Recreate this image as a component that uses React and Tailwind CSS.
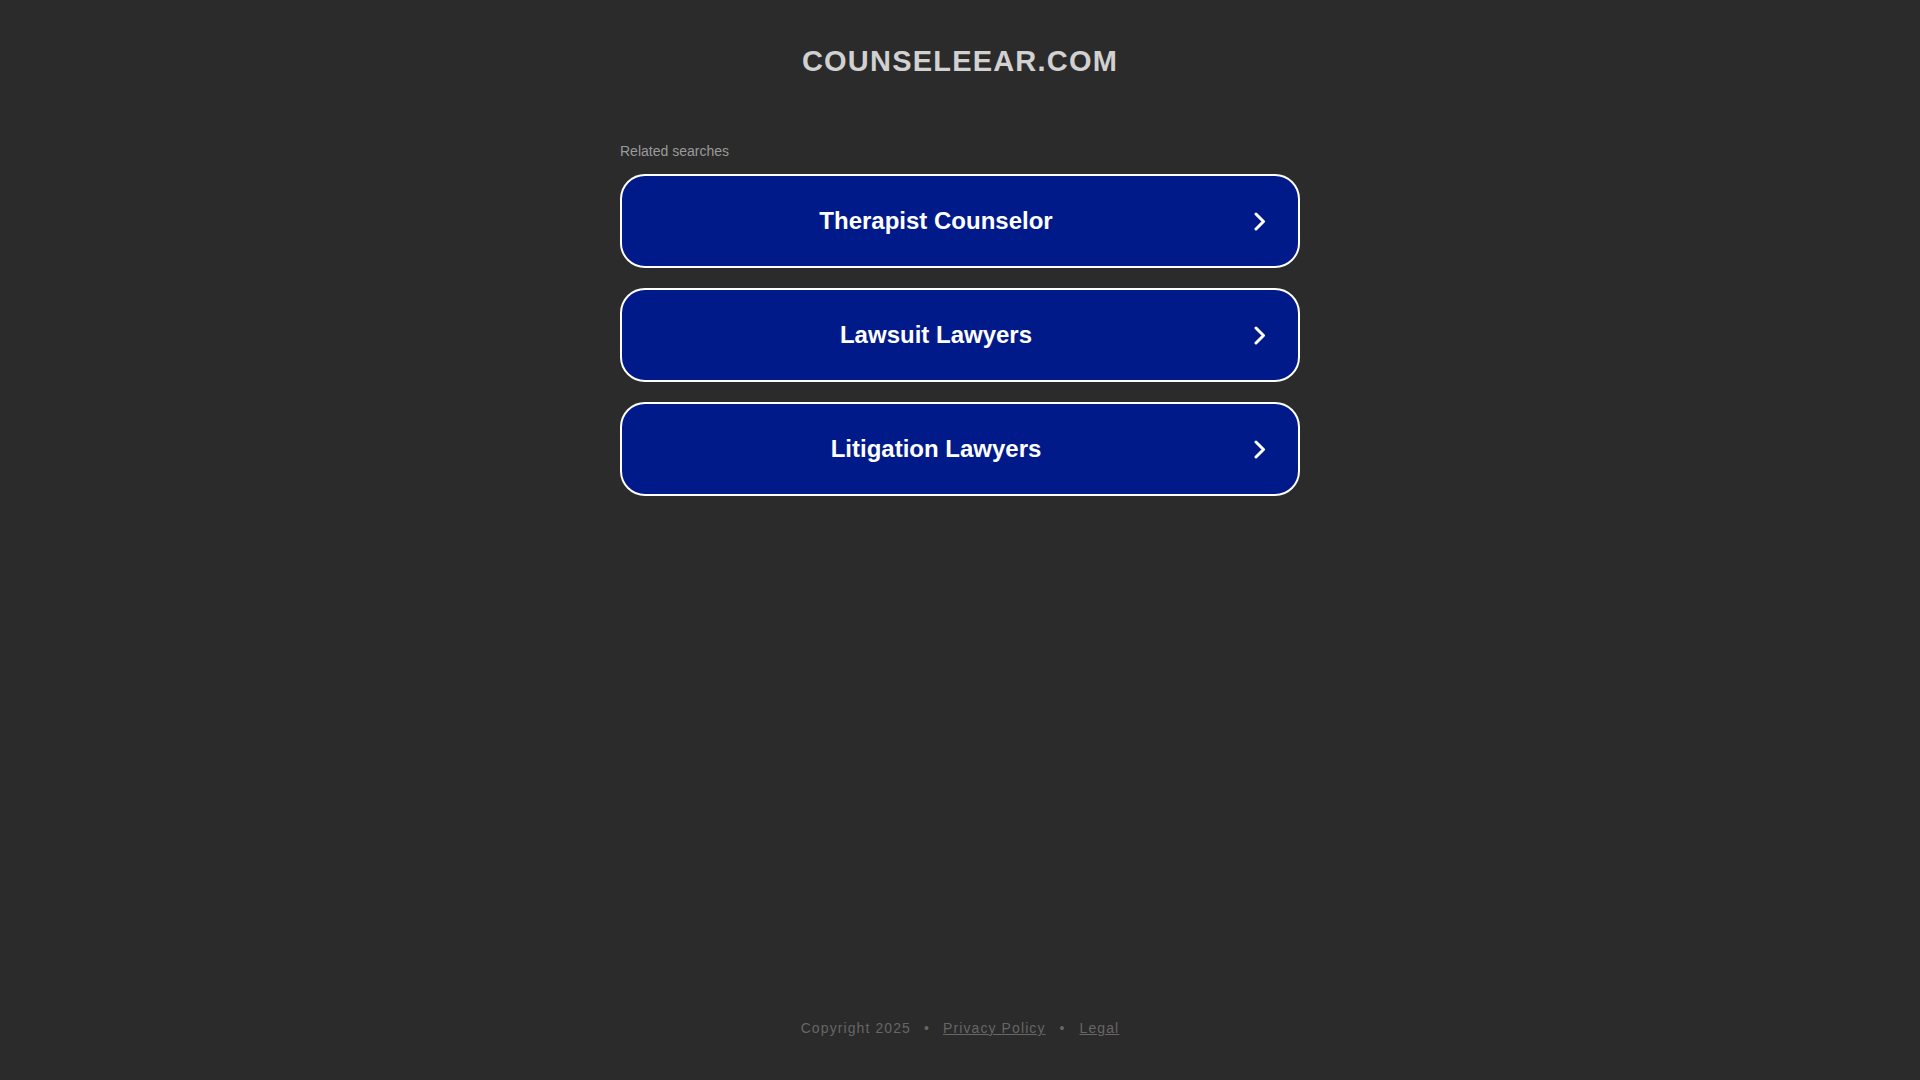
const links = ['Therapist Counselor', 'Lawsuit Lawyers', 'Litigation Lawyers']

export default function App() {
  return (
    <div
      className="flex min-h-screen flex-col items-center bg-[#2b2b2b]"
      style={{ fontFamily: '"Liberation Sans", Arial, sans-serif' }}
    >
      <h1 className="pt-[43px] text-[29px] font-bold leading-[36px] tracking-[1.2px] text-[#d1d1d1]">
        COUNSELEEAR.COM
      </h1>

      <div className="mt-[64px] w-[680px]">
        <p className="mb-[15px] text-[14px] leading-[16px] text-[#9a9a9a]">Related searches</p>
        <div className="flex flex-col gap-[20px]">
          {links.map((t) => (
            <a
              key={t}
              href="#"
              className="flex h-[94px] items-center rounded-[25px] border-2 border-white bg-[#011a8a] pl-[20px] pr-[32px]"
            >
              <span className="flex-1 text-center text-[24px] font-bold text-white">{t}</span>
              <svg className="ml-[24px]" width="12" height="19" viewBox="0 0 12 19" fill="none">
                <polyline points="2,2 9.5,9.5 2,17" stroke="white" strokeWidth="3" strokeLinecap="round" strokeLinejoin="round" />
              </svg>
            </a>
          ))}
        </div>
      </div>

      <footer className="mt-auto pb-[44px] text-[14px] leading-[16px] tracking-[1.1px] text-[#666]">
        <span>Copyright 2025</span>
        <span className="mx-[13px]">•</span>
        <a href="#" className="underline">Privacy Policy</a>
        <span className="mx-[14px]">•</span>
        <a href="#" className="underline">Legal</a>
      </footer>
    </div>
  )
}
